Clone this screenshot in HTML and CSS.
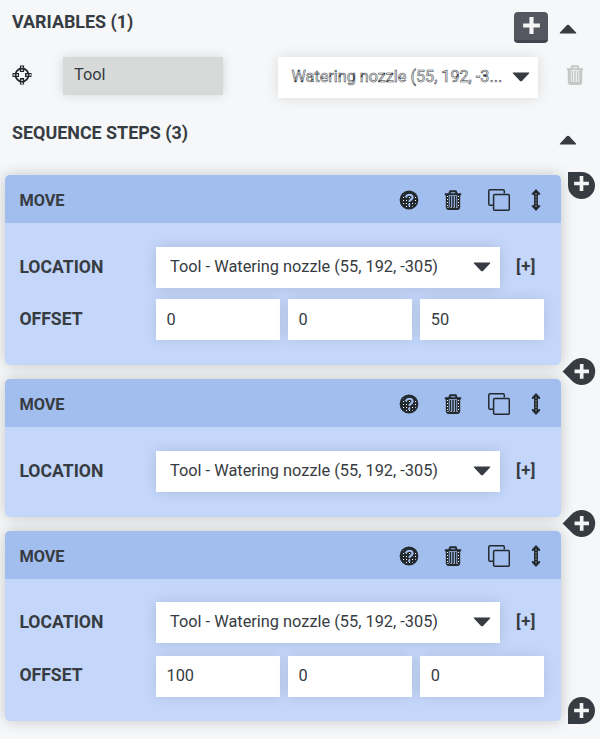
FILE: index.html
```html
<!DOCTYPE html>
<html lang="en">
<head>
<meta charset="utf-8">
<title>Sequence editor</title>
<link rel="stylesheet" href="styles.css">
</head>
<body>
<svg class="defs" width="0" height="0" aria-hidden="true">
  <defs>
    <pattern id="dots" width="3" height="3" patternUnits="userSpaceOnUse"><rect x="1" y="1" width="1" height="1" fill="#fff"/></pattern>
  </defs>
  <symbol id="plus" viewBox="0 0 14 14"><path d="M7 1.8v10.4M1.8 7h10.4" fill="none" stroke="#f4f4f4" stroke-width="3.4" stroke-linecap="square"/></symbol>
  <symbol id="caret" viewBox="0 0 18 10"><path d="M1.2 .5h15.6q1 .2.2 1L10 8.9q-1 .9-2 0L1 1.5q-.8-.8.2-1z" fill="#373c42"/></symbol>
  <symbol id="help" viewBox="0 0 20 20">
    <circle cx="10" cy="10" r="9.4" fill="#22292f"/>
    <circle cx="10" cy="10" r="7.6" fill="url(#dots)"/>
    <path d="M6.6 7.2Q8 4.5 10.5 4.7c2.2.1 3.3 1.5 3 3-.4 2-3 2-3.2 4.2M10.2 13.7v2" fill="none" stroke="#22292f" stroke-width="4"/>
    <path d="M6.6 7.2Q8 4.5 10.5 4.7c2.2.1 3.3 1.5 3 3-.4 2-3 2-3.2 4.2M10.2 13.7v2" fill="none" stroke="#a3bfee" stroke-width="2.1"/>
  </symbol>
  <symbol id="trash" viewBox="0 0 18 20">
    <path d="M.8 4.3h16.4M5.3 3.7 6.3 1.3h5.4l1 2.4" fill="none" stroke="currentColor" stroke-width="2"/>
    <path d="M3.3 4.5v12.2q0 1.8 1.7 1.8h8q1.7 0 1.7-1.8V4.5" fill="none" stroke="currentColor" stroke-width="3"/>
    <path d="M6.4 6v11M9 6v11M11.6 6v11" fill="none" stroke="currentColor" stroke-width="1.5"/>
  </symbol>
  <symbol id="copy" viewBox="0 0 24 24"><path d="M6 17.3H3Q1.8 17.3 1.8 16V3Q1.8 1.7 3 1.7h13Q17.3 1.7 17.3 3v2.5" fill="none" stroke="#22292f" stroke-width="1.5"/><rect x="6.6" y="6.6" width="15.7" height="15.7" rx="1" fill="none" stroke="#22292f" stroke-width="1.5"/></symbol>
  <symbol id="updown" viewBox="0 0 10 22"><path d="M5 0 9.2 4.4v1.4H7v10.4h2.2v1.4L5 22l-4.2-4.4v-1.4H3V5.8H.8V4.4z" fill="#22292f"/><path d="M5 4.5v14" stroke="#fff" stroke-dasharray="1 2"/></symbol>
</svg>

<main class="editor">
  <header class="section-head">
    <h2>VARIABLES (1)</h2>
    <button class="add-var" aria-label="Add variable"><svg width="17" height="17"><use href="#plus"/></svg></button>
    <svg class="fold" width="18" height="10"><use href="#caret"/></svg>
  </header>
  <div class="variable">
    <svg class="target" width="20" height="20" viewBox="0 0 20 20">
      <circle cx="10" cy="10" r="6.5" fill="none" stroke="#22292f" stroke-width="1.8"/>
      <path d="M10 .5v6.5M10 13v6.5M.5 10h6.5M13 10h6.5" stroke="#22292f" stroke-width="4.2"/>
      <path d="M10 1.5v5M10 14.5v5M1.5 10h5M14.5 10h5" stroke="#fff" stroke-width="1.4" stroke-dasharray="1.4 1.6"/>
    </svg>
    <div class="var-name">Tool</div>
    <div class="select var-value"><span>Watering nozzle (55, 192, -3...</span><svg width="18" height="10"><use href="#caret"/></svg></div>
    <svg class="remove" width="18" height="20"><use href="#trash"/></svg>
  </div>
  <header class="section-head steps-head">
    <h2>SEQUENCE STEPS (3)</h2>
    <svg class="fold" width="18" height="10"><use href="#caret"/></svg>
  </header>

  <section class="steps">
    <article class="step">
      <button class="insert first" aria-label="Insert step"><svg width="15" height="15"><use href="#plus"/></svg></button>
      <header class="step-head"><h3>MOVE</h3><div class="tools">
        <svg width="20" height="20"><use href="#help"/></svg><svg class="bin" width="18" height="20" viewBox="0 0 18 20"><use href="#trash"/><path d="M3.5 6v12M14.5 6v12M3.5 17.5h11" fill="none" stroke="#fff" stroke-dasharray="1 2"/></svg><svg width="24" height="24"><use href="#copy"/></svg><svg width="10" height="22"><use href="#updown"/></svg>
      </div></header>
      <div class="fields">
        <label>LOCATION</label><div class="location"><div class="select"><span>Tool - Watering nozzle (55, 192, -305)</span><svg width="18" height="10"><use href="#caret"/></svg></div><b class="expand">[+]</b></div>
        <label>OFFSET</label><div class="offsets"><div>0</div><div>0</div><div>50</div></div>
      </div>
      <button class="insert between" aria-label="Insert step"><svg width="15" height="15"><use href="#plus"/></svg></button>
    </article>

    <article class="step short">
      <header class="step-head"><h3>MOVE</h3><div class="tools">
        <svg width="20" height="20"><use href="#help"/></svg><svg class="bin" width="18" height="20" viewBox="0 0 18 20"><use href="#trash"/><path d="M3.5 6v12M14.5 6v12M3.5 17.5h11" fill="none" stroke="#fff" stroke-dasharray="1 2"/></svg><svg width="24" height="24"><use href="#copy"/></svg><svg width="10" height="22"><use href="#updown"/></svg>
      </div></header>
      <div class="fields">
        <label>LOCATION</label><div class="location"><div class="select"><span>Tool - Watering nozzle (55, 192, -305)</span><svg width="18" height="10"><use href="#caret"/></svg></div><b class="expand">[+]</b></div>
      </div>
      <button class="insert between" aria-label="Insert step"><svg width="15" height="15"><use href="#plus"/></svg></button>
    </article>

    <article class="step final">
      <header class="step-head"><h3>MOVE</h3><div class="tools">
        <svg width="20" height="20"><use href="#help"/></svg><svg class="bin" width="18" height="20" viewBox="0 0 18 20"><use href="#trash"/><path d="M3.5 6v12M14.5 6v12M3.5 17.5h11" fill="none" stroke="#fff" stroke-dasharray="1 2"/></svg><svg width="24" height="24"><use href="#copy"/></svg><svg width="10" height="22"><use href="#updown"/></svg>
      </div></header>
      <div class="fields">
        <label>LOCATION</label><div class="location"><div class="select"><span>Tool - Watering nozzle (55, 192, -305)</span><svg width="18" height="10"><use href="#caret"/></svg></div><b class="expand">[+]</b></div>
        <label>OFFSET</label><div class="offsets"><div>100</div><div>0</div><div>0</div></div>
      </div>
      <button class="insert last" aria-label="Insert step"><svg width="15" height="15"><use href="#plus"/></svg></button>
    </article>
  </section>
</main>
</body>
</html>
```

FILE: styles.css
```css
* { box-sizing: border-box; }
body { margin: 0; height: 739px; overflow: hidden; background: #f5f7f9; color: #373c42; font: 16.35px/20px Roboto, sans-serif; }
svg { display: block; flex: none; }
.defs { position: absolute; }
h2, h3 { margin: 0; font-weight: 700; }
h2 { font-size: 17.9px; flex: 1; }
button { border: 0; padding: 0; display: flex; align-items: center; justify-content: center; }

.section-head { display: flex; align-items: flex-start; height: 57px; padding: 12px 23.5px 0 12px; }
.add-var { width: 34px; height: 31px; margin-right: 10.5px; padding-bottom: 2px; background: #54575f; border-bottom: 3px solid #42454d; border-radius: 4px; }
.fold { transform: rotate(180deg); margin-top: 12px; }
.variable { display: flex; align-items: flex-start; height: 66px; padding-left: 12px; }
.target { margin-top: 8px; }
.var-name { width: 160px; height: 38px; margin-left: 31px; padding: 8px 11px; background: #d8dad9; box-shadow: 0 0 12px rgba(0, 0, 0, .14); }
.select { display: flex; align-items: center; justify-content: space-between; height: 41px; padding: 0 9px 2px 14px; background: #fff; box-shadow: 0 0 14px rgba(0, 0, 0, .12); white-space: nowrap; }
.select svg { margin-top: 1px; }
.var-value { width: 260px; margin-left: 55px; padding: 0 8px 2px 13.5px; }
.var-value span { color: #fff; font-size: 16.2px; -webkit-text-stroke: .55px #30353b; }
.remove { margin: 8px 0 0 28px; color: #c5c8c7; }
.steps-head { height: 52px; padding-top: 0; }
.steps-head .fold { margin-top: 12px; }

.steps { display: flex; flex-direction: column; gap: 14px; width: 556px; margin-left: 5.4px; }
.step { position: relative; height: 190px; background: #c4d7fa; border-radius: 5px; box-shadow: 0 0 15px rgba(0, 0, 0, .2); }
.step.short { height: 138px; }
.step-head { display: flex; align-items: center; justify-content: space-between; height: 47.5px; padding: 3px 20.4px 0 14px; background: #a2beef; border-radius: 5px 5px 0 0; }
h3 { font-size: 16.3px; padding-top: 1px; }
.tools { display: flex; align-items: center; color: #22292f; }
.bin { margin: 0 25px 0 24.5px; }
.tools svg:last-child { margin-left: 20.5px; }
.fields { display: grid; grid-template-columns: 136.6px 1fr; row-gap: 11px; align-items: center; padding: 24.5px 17.5px 0 14px; }
.final .fields { padding-top: 23.5px; row-gap: 12.5px; }
label { font-size: 17.6px; font-weight: 700; padding-bottom: 2px; }
.location { display: flex; align-items: center; }
.location .select { width: 344px; }
.expand { margin: -4px 0 0 16px; font-size: 16.8px; font-weight: 700; letter-spacing: .5px; }
.offsets { display: grid; grid-template-columns: repeat(3, 1fr); gap: 8.5px; }
.offsets div { height: 41px; padding: 10.5px 10.5px; background: #fff; box-shadow: 0 0 14px rgba(0, 0, 0, .1); }

.insert { position: absolute; right: -34.1px; z-index: 2; width: 27.4px; height: 27.4px; background: #373c42; border-radius: 50%; }
.first { top: -3px; padding-bottom: 4px; border-top-left-radius: 0; }
.between { bottom: -20.5px; border-bottom-left-radius: 0; transform: rotate(45deg); }
.between svg { transform: rotate(-45deg); }
.last { bottom: -3px; border-bottom-left-radius: 0; }
```
